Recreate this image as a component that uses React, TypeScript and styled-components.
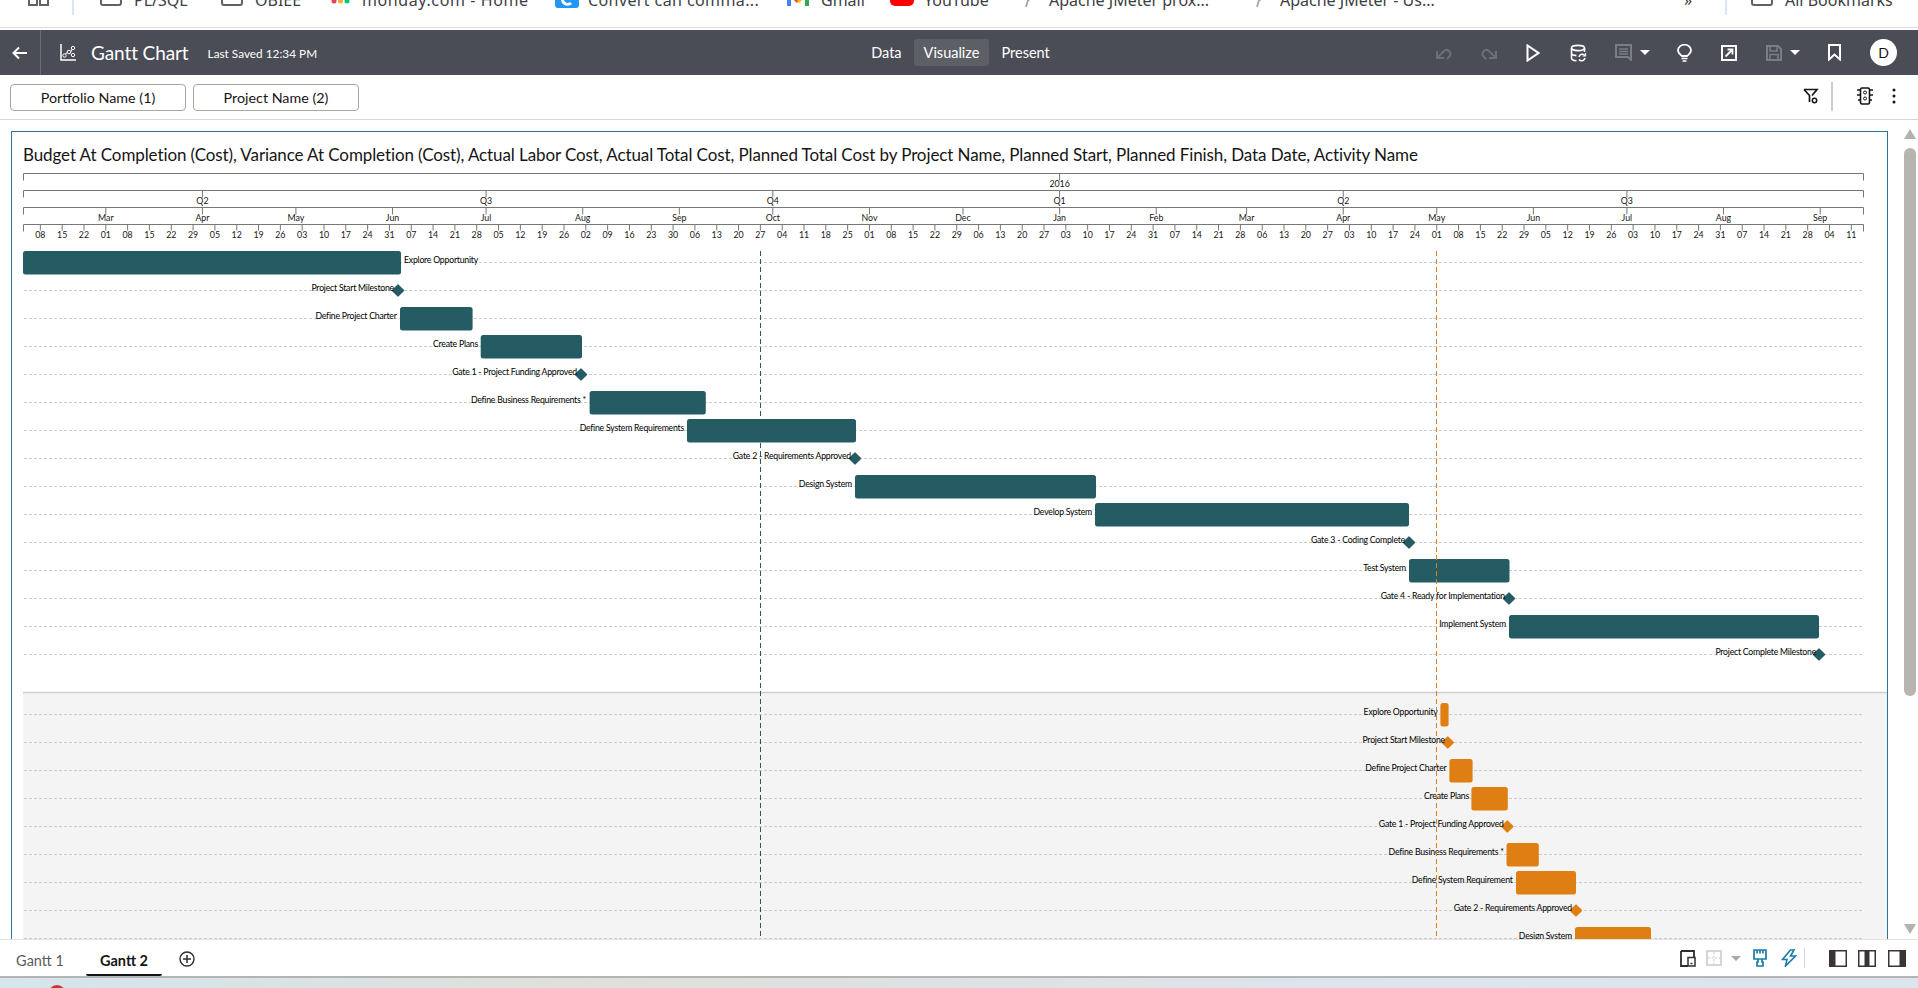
import React from 'react';
import styled, { createGlobalStyle } from 'styled-components';

const GlobalStyle = createGlobalStyle`
  html, body { margin: 0; padding: 0; background: #fff; overflow: hidden; }
  body { font-family: Lato, "Noto Sans", sans-serif; color: #161513; }
`;

const Page = styled.div`
  width: 1918px;
  height: 988px;
  display: flex;
  flex-direction: column;
  overflow: hidden;
`;

/* browser bookmarks, cut off by the top of the capture */
const BookmarkBar = styled.div`
  height: 30px;
  flex: none;
  box-sizing: border-box;
  border-bottom: 2px solid #fff;
  box-shadow: inset 0 -1px 0 #dcdcdc;
  overflow: hidden;
  background: #fff;
`;
const BookmarkRow = styled.div`
  display: flex;
  align-items: center;
  height: 24px;
  margin-top: -17px;
  padding-left: 28px;
`;
const BookmarkItem = styled.div<{ $w: number; $gap?: number }>`
  width: ${p => p.$w}px;
  flex: none;
  display: flex;
  align-items: center;
  gap: ${p => p.$gap ?? 12}px;
  font-family: "Noto Sans", sans-serif;
  font-size: 16px;
  color: #3c4043;
  white-space: nowrap;
`;
const BookmarkText = styled.span<{ $spread?: number }>`
  margin-top: 10px;
  letter-spacing: ${p => p.$spread || 0}px;
`;
const BookmarkDivider = styled.div<{ $mr: number }>`
  width: 2px;
  height: 40px;
  background: #dbe6f2;
  margin-right: ${p => p.$mr}px;
  flex: none;
`;

const HeaderBar = styled.header`
  height: 45px;
  flex: none;
  background: #4a4d55;
  color: #fff;
  display: grid;
  grid-template-columns: 1fr auto 1fr;
  align-items: center;
`;
const HeaderLeft = styled.div`
  display: flex;
  align-items: center;
  height: 100%;
`;
const BackSlot = styled.div`
  width: 40px;
  height: 100%;
  border-right: 1px solid #6a6d74;
  display: flex;
  align-items: center;
  justify-content: center;
  box-sizing: content-box;
  margin-right: 19px;
`;
const AppTitle = styled.div`
  font-size: 19px;
  margin-left: 15px;
  letter-spacing: -0.1px;
`;
const SavedText = styled.div`
  font-size: 11.8px;
  margin-left: 19px;
  margin-top: 2px;
`;
const ModeNav = styled.nav`
  display: flex;
  align-items: center;
  gap: 2px;
  margin-left: 3px;
`;
const ModeItem = styled.div<{ $active?: boolean }>`
  height: 27px;
  line-height: 27px;
  padding: 0 10px;
  font-size: 14.5px;
  border-radius: 3px;
  background: ${p => (p.$active ? '#5c5f66' : 'transparent')};
`;
const HeaderRight = styled.div`
  display: flex;
  align-items: center;
  justify-content: flex-end;
  padding-right: 21px;
`;
const IconSlot = styled.div<{ $w: number }>`
  width: ${p => p.$w}px;
  display: flex;
  align-items: center;
  justify-content: center;
  gap: 8px;
  flex: none;
`;
const Caret = styled.span<{ $color: string }>`
  width: 0;
  height: 0;
  border-left: 5px solid transparent;
  border-right: 5px solid transparent;
  border-top: 5px solid ${p => p.$color};
`;
const Avatar = styled.div`
  width: 27px;
  height: 27px;
  border-radius: 50%;
  background: #fff;
  color: #161513;
  font-size: 14px;
  line-height: 27px;
  text-align: center;
  margin-left: 21px;
`;

const FilterBar = styled.div`
  height: 45px;
  flex: none;
  box-sizing: border-box;
  border-bottom: 1px solid #d4d4d4;
  display: flex;
  align-items: flex-start;
  padding: 9px 0 0 10px;
  gap: 7px;
`;
const FilterChip = styled.div<{ $w: number }>`
  width: ${p => p.$w}px;
  height: 27px;
  box-sizing: border-box;
  border: 1px solid #aaa59f;
  border-radius: 4px;
  font-size: 14.3px;
  line-height: 25px;
  text-align: center;
`;
const FilterTools = styled.div`
  margin-left: auto;
  display: flex;
  align-items: center;
  height: 30px;
  margin-top: -3px;
  padding-right: 3px;
`;
const ToolDivider = styled.div`
  width: 2px;
  height: 29px;
  background: #cfccc8;
  margin: 0 24px 0 12px;
`;

const CanvasArea = styled.div`
  flex: 1;
  display: flex;
  min-height: 0;
  padding-top: 11px;
`;
const ChartPanel = styled.section`
  width: 1877px;
  margin-left: 11px;
  box-sizing: border-box;
  border: 1px solid #2f7596;
  border-bottom: none;
  overflow: hidden;
`;
const ChartTitle = styled.h1`
  margin: 0;
  height: 38px;
  line-height: 46px;
  padding-left: 11px;
  font-size: 17px;
  font-weight: 400;
  letter-spacing: -0.1px;
  white-space: nowrap;
`;
const ChartSvg = styled.svg`
  display: block;
`;
const AxisText = styled.text`
  font-family: Lato, sans-serif;
  font-size: 8.8px;
  fill: #161513;
  text-anchor: middle;
`;
const BarLabel = styled.text<{ $right?: boolean }>`
  font-family: Lato, sans-serif;
  font-size: 8.7px;
  letter-spacing: -0.22px;
  fill: #000;
  text-anchor: ${p => (p.$right ? 'start' : 'end')};
`;

const Scrollbar = styled.div`
  width: 30px;
  display: flex;
  flex-direction: column;
  align-items: flex-end;
  padding-right: 2px;
  box-sizing: border-box;
`;
const ScrollArrow = styled.div<{ $down?: boolean }>`
  width: 0;
  height: 0;
  border-left: 6px solid transparent;
  border-right: 6px solid transparent;
  border-${p => (p.$down ? 'top' : 'bottom')}: 10px solid #b5b1ac;
  margin-top: ${p => (p.$down ? 228 : -2)}px;
`;
const ScrollThumb = styled.div`
  width: 12px;
  height: 548px;
  margin-top: 9px;
  border-radius: 6px;
  background: #b8b4af;
`;

const TabBar = styled.div`
  height: 37px;
  flex: none;
  box-sizing: border-box;
  border-top: 1px solid #e2e2e2;
  display: flex;
  align-items: stretch;
  padding-right: 6px;
`;
const Tab = styled.div<{ $active?: boolean }>`
  width: 76px;
  margin-left: ${p => (p.$active ? 8 : 2)}px;
  box-sizing: border-box;
  text-align: center;
  font-size: 14.5px;
  line-height: 42px;
  font-weight: ${p => (p.$active ? 700 : 400)};
  color: ${p => (p.$active ? '#161513' : '#5b5b5b')};
  border-bottom: 2px solid ${p => (p.$active ? '#161513' : 'transparent')};
  border-radius: 0 0 2px 2px;
`;
const AddTab = styled.div`
  margin-left: 17px;
  padding-top: 11px;
`;
const TabTools = styled.div`
  margin-left: auto;
  display: flex;
  align-items: center;
`;
const TabDivider = styled.div`
  width: 1px;
  height: 20px;
  background: #d4d4d4;
  margin-right: 19px;
`;
const DesktopStrip = styled.div`
  height: 12px;
  flex: none;
  box-sizing: border-box;
  border-top: 2px solid #b4b4b4;
  background: linear-gradient(90deg, #d5e6ef 0%, #dfe0da 30%, #dde4ec 70%, #dbe5ee 100%);
  display: flex;
  padding-left: 48px;
  overflow: hidden;
`;
const TaskIcon = styled.div`
  width: 18px;
  height: 18px;
  margin-top: 7px;
  border-radius: 50%;
  background: #c8342b;
`;

/* ---- icons ---- */
const Ic = ({ w = 18, h = 18, children }: { w?: number; h?: number; children: React.ReactNode }) => (
  <svg width={w} height={h} viewBox={`0 0 ${w} ${h}`} fill="none">{children}</svg>
);

const BackIcon = () => (
  <Ic w={16} h={14}>
    <path d="M15 7H2M7 1.500 1.500 7 7 12.500" stroke="#fff" strokeWidth="2" />
  </Ic>
);
const GanttIcon = () => (
  <Ic w={16} h={17}>
    <path d="M1 0v16h15" stroke="#fff" strokeWidth="1.500" />
    <path d="M4 11l4-3 2 1 3-5" stroke="#fff" strokeWidth="1" />
    <circle cx="4.500" cy="11.500" r="1.700" fill="#4a4d55" stroke="#fff" />
    <circle cx="9" cy="8" r="1.800" fill="#4a4d55" stroke="#fff" />
    <circle cx="13" cy="4" r="1.700" fill="#4a4d55" stroke="#fff" />
    <circle cx="13" cy="11" r="1.700" fill="#4a4d55" stroke="#fff" />
  </Ic>
);
const UndoIcon = ({ flip }: { flip?: boolean }) => (
  <Ic w={17} h={15}>
    <g transform={flip ? 'matrix(-1 0 0 1 17 0)' : undefined} stroke="#6c6f75" strokeWidth="2">
      <path d="M2 6v7h7" />
      <path d="M2 13 9 6c3-3 8 1 6 5l-3 3" />
    </g>
  </Ic>
);
const PlayIcon = () => (
  <Ic w={14} h={18}>
    <path d="M1.500 1.500v15L12.500 9z" stroke="#fff" strokeWidth="2" strokeLinejoin="miter" />
  </Ic>
);
const DataIcon = () => (
  <Ic w={17} h={18}>
    <ellipse cx="8" cy="4" rx="6.500" ry="2.600" stroke="#fff" strokeWidth="1.600" />
    <path d="M1.500 4v10c0 1.600 2.500 2.600 5 2.700M14.500 4v4M1.500 9c0 1.400 2.500 2.500 5 2.600" stroke="#fff" strokeWidth="1.600" />
    <path d="M9 13a3.400 3.400 0 0 1 6-1.500M15 14a3.400 3.400 0 0 1-6 1.500" stroke="#fff" strokeWidth="1.500" />
    <path d="M15.500 9v3h-3" stroke="#fff" strokeWidth="1.200" />
  </Ic>
);
const CommentIcon = () => (
  <Ic w={17} h={17}>
    <path d="M1 1h15v15l-3-3H1z" stroke="#7a7d83" strokeWidth="2" />
    <path d="M4 5h9M4 7.500h9M4 10h9" stroke="#7a7d83" strokeWidth="1.400" />
  </Ic>
);
const BulbIcon = () => (
  <Ic w={15} h={18}>
    <path d="M5 12C3.500 10.500 1 9.500 1 6.500a6.500 5.800 0 0 1 13 0c0 3-2.500 4-4 5.500z" stroke="#fff" strokeWidth="1.800" />
    <path d="M4.500 14.500h6M5.500 17h4" stroke="#fff" strokeWidth="1.700" />
  </Ic>
);
const PresentIcon = () => (
  <Ic w={16} h={16}>
    <rect x="1" y="1" width="14" height="14" stroke="#fff" strokeWidth="2" />
    <path d="M4.500 11.500 11 5M6.500 4.500h5v5" stroke="#fff" strokeWidth="1.800" />
  </Ic>
);
const SaveIcon = () => (
  <Ic w={16} h={16}>
    <path d="M1 1h11l3 3v11H1z" stroke="#7a7d83" strokeWidth="2" />
    <path d="M4 1v5h7V1M4 15V9.500h8V15" stroke="#7a7d83" strokeWidth="1.600" />
  </Ic>
);
const BookmarkIcon = () => (
  <Ic w={13} h={17}>
    <path d="M1 1h11v14.500L6.500 10.500 1 15.500z" stroke="#fff" strokeWidth="2" />
  </Ic>
);
const FilterIcon = () => (
  <Ic w={16} h={16}>
    <path d="M1 1.500h13L9 7.500M1 1.500l5.500 6V14" stroke="#161513" strokeWidth="1.700" />
    <circle cx="11.500" cy="12.500" r="2.200" stroke="#161513" strokeWidth="1.500" />
  </Ic>
);
const SignalIcon = () => (
  <Ic w={16} h={18}>
    <rect x="3.500" y="1" width="9" height="16" rx="1.500" stroke="#161513" strokeWidth="1.600" />
    <path d="M0 3h3.500M0 8h3.500M1 13h2.500M12.500 3H16M12.500 8H16M12.500 13H15" stroke="#161513" strokeWidth="1.700" />
    <circle cx="8" cy="5.500" r="1.500" stroke="#161513" />
    <circle cx="8" cy="11.500" r="1.500" stroke="#161513" />
  </Ic>
);
const DotsIcon = () => (
  <Ic w={4} h={18}>
    <circle cx="2" cy="3" r="1.500" fill="#161513" />
    <circle cx="2" cy="9" r="1.500" fill="#161513" />
    <circle cx="2" cy="15" r="1.500" fill="#161513" />
  </Ic>
);
const DeviceIcon = () => (
  <Ic w={16} h={17}>
    <path d="M1 1h13v6M8 16H1V1" stroke="#312d2a" strokeWidth="1.800" />
    <rect x="8" y="7.500" width="7" height="8.500" stroke="#312d2a" strokeWidth="1.500" />
    <path d="M10.500 13.500h2" stroke="#312d2a" strokeWidth="1.500" />
  </Ic>
);
const GridIcon = () => (
  <Ic w={16} h={16}>
    <rect x="1" y="1" width="14" height="14" stroke="#c9c9c9" strokeWidth="1.500" />
    <path d="M8 2v12M2 8h12" stroke="#c9c9c9" strokeDasharray="2 1.500" />
  </Ic>
);
const BrushIcon = () => (
  <Ic w={14} h={18}>
    <path d="M1 1h12v9H1zM4 1v3.500M7 1v3.500M10 1v3.500M5 10v3H4v4h6v-4H9v-3" stroke="#1e7aa8" strokeWidth="1.700" />
  </Ic>
);
const BoltIcon = () => (
  <Ic w={16} h={18}>
    <path d="M9.500 1 1.500 10.500H6L4.500 17 14.500 7H9.500L13 1z" stroke="#1e7aa8" strokeWidth="1.600" />
  </Ic>
);
const LayoutIcon = ({ mode }: { mode: 'left' | 'middle' | 'right' }) => (
  <Ic w={18} h={17}>
    <rect x="0.750" y="0.750" width="16.500" height="15.500" fill="#fff" stroke="#3a3532" strokeWidth="1.500" />
    {mode === 'left' && <rect x="0" y="0" width="6.500" height="17" fill="#3a3532" />}
    {mode === 'middle' && <rect x="6.500" y="0" width="5" height="17" fill="#3a3532" />}
    {mode === 'right' && <rect x="11.500" y="0" width="6.500" height="17" fill="#3a3532" />}
  </Ic>
);
const PlusCircle = () => (
  <Ic w={16} h={16}>
    <circle cx="8" cy="8" r="7" stroke="#312d2a" strokeWidth="1.400" />
    <path d="M4 8h8M8 4v8" stroke="#312d2a" strokeWidth="1.500" />
  </Ic>
);
const Folder = () => (
  <Ic w={22} h={22}>
    <rect x="1" y="1" width="20" height="20" rx="2" stroke="#5f6368" strokeWidth="2" />
  </Ic>
);
const AppsIcon = () => (
  <Ic w={21} h={26}>
    <path d="M1 15h8v8H1zM12 15h8v8h-8z" stroke="#5f6368" strokeWidth="2" />
  </Ic>
);
const MondayIcon = () => (
  <Ic w={19} h={22}>
    <circle cx="3" cy="17" r="2.500" fill="#e2445c" />
    <circle cx="9.500" cy="17" r="2.500" fill="#fdab3d" />
    <circle cx="16" cy="17" r="2.500" fill="#00c875" />
  </Ic>
);
const ConvertIcon = () => (
  <Ic w={24} h={26}>
    <rect x="0" y="0" width="24" height="26" rx="3" fill="#2196f3" />
    <path d="M16 14a5 5 0 1 1-1-8" stroke="#fff" strokeWidth="3" transform="translate(0 7)" />
  </Ic>
);
const GmailIcon = () => (
  <Ic w={22} h={22}>
    <path d="M2 8v14" stroke="#4285f4" strokeWidth="4" />
    <path d="M20 8v14" stroke="#34a853" strokeWidth="4" />
    <path d="M7 14l4 4" stroke="#ea4335" strokeWidth="3" />
    <path d="M15 14l-4 4" stroke="#fbbc04" strokeWidth="3" />
  </Ic>
);
const YouTubeIcon = () => (
  <Ic w={24} h={22}>
    <rect x="0" y="0" width="24" height="22" rx="5" fill="#f00" />
    <path d="M10 5v8l6-4z" fill="#fff" />
  </Ic>
);
const FeatherIcon = () => (
  <Ic w={14} h={24}>
    <path d="M11 4C8 8 6 12 5 18l4-2c1-4 2-8 2-12z" fill="#8c3a62" />
    <path d="M5 17 3 24" stroke="#a9a3b8" strokeWidth="1.800" />
  </Ic>
);

/* ---- chart data, in page pixels ---- */
const JAN_1_2016 = Date.UTC(2016, 0, 1);
const PX_PER_DAY = 3.117;
const xOf = (y: number, m: number, d: number) =>
  1059.6 + ((Date.UTC(y, m, d) - JAN_1_2016) / 86400000) * PX_PER_DAY;

const AXIS_LEFT = 23.5;
const AXIS_RIGHT = 1863.5;
const TEAL = '#255c63';
const ORANGE = '#df7e12';
const MONTHS = ['Jan', 'Feb', 'Mar', 'Apr', 'May', 'Jun', 'Jul', 'Aug', 'Sep', 'Oct', 'Nov', 'Dec'];

const quarters = [
  { label: 'Q2', x: xOf(2015, 3, 1) },
  { label: 'Q3', x: xOf(2015, 6, 1) },
  { label: 'Q4', x: xOf(2015, 9, 1) },
  { label: 'Q1', x: xOf(2016, 0, 1) },
  { label: 'Q2', x: xOf(2016, 3, 1) },
  { label: 'Q3', x: xOf(2016, 6, 1) },
];

const months: { label: string; x: number }[] = [];
for (let i = 2; i <= 20; i++) {
  months.push({ label: MONTHS[i % 12], x: xOf(2015 + Math.floor(i / 12), i % 12, 1) });
}

const weeks: { label: string; x: number }[] = [];
for (let t = Date.UTC(2015, 1, 8); t <= Date.UTC(2016, 8, 11); t += 7 * 86400000) {
  const d = new Date(t);
  weeks.push({
    label: String(d.getUTCDate()).padStart(2, '0'),
    x: xOf(d.getUTCFullYear(), d.getUTCMonth(), d.getUTCDate()),
  });
}

type Task = { name: string; from?: number; to?: number; at?: number; end?: number; after?: boolean };

const planned: Task[] = [
  { name: 'Explore Opportunity', from: 23, to: 401, after: true },
  { name: 'Project Start Milestone', at: 398, end: 394 },
  { name: 'Define Project Charter', from: 400, to: 472.6, end: 396.7 },
  { name: 'Create Plans', from: 480.7, to: 582, end: 478 },
  { name: 'Gate 1 - Project Funding Approved', at: 581, end: 577 },
  { name: 'Define Business Requirements *', from: 589.6, to: 705.8, end: 586 },
  { name: 'Define System Requirements', from: 687, to: 856, end: 684 },
  { name: 'Gate 2 - Requirements Approved', at: 855, end: 851 },
  { name: 'Design System', from: 855, to: 1096, end: 852 },
  { name: 'Develop System', from: 1095, to: 1409, end: 1092 },
  { name: 'Gate 3 - Coding Complete', at: 1409, end: 1405 },
  { name: 'Test System', from: 1409, to: 1509.5, end: 1406 },
  { name: 'Gate 4 - Ready for Implementation', at: 1509, end: 1505 },
  { name: 'Implement System', from: 1509, to: 1819, end: 1506 },
  { name: 'Project Complete Milestone', at: 1819, end: 1816 },
];

const actual: Task[] = [
  { name: 'Explore Opportunity', from: 1440.4, to: 1448.6, end: 1437.6 },
  { name: 'Project Start Milestone', at: 1447.8, end: 1445 },
  { name: 'Define Project Charter', from: 1449.4, to: 1472.6, end: 1446.5 },
  { name: 'Create Plans', from: 1471.4, to: 1507.8, end: 1469 },
  { name: 'Gate 1 - Project Funding Approved', at: 1507.3, end: 1503.7 },
  { name: 'Define Business Requirements *', from: 1506.5, to: 1538.8, end: 1503.7 },
  { name: 'Define System Requirement', from: 1516, to: 1576, end: 1512.6 },
  { name: 'Gate 2 - Requirements Approved', at: 1576, end: 1572 },
  { name: 'Design System', from: 1575, to: 1651, end: 1572 },
];

function TaskRows({ tasks, top, color }: { tasks: Task[]; top: number; color: string }) {
  return (
    <>
      {tasks.map((t, i) => {
        const y = top + i * 28;
        return (
          <g key={t.name + i}>
            {t.at !== undefined ? (
              <rect
                x={t.at - 4.6}
                y={y - 4.1}
                width="9.200"
                height="9.200"
                rx="1"
                fill={color}
                transform={`rotate(45 ${t.at} ${y + 0.5})`}
              />
            ) : (
              <rect x={t.from} y={y - 11} width={(t.to || 0) - (t.from || 0)} height="23.500" rx="2.500" fill={color} />
            )}
            {t.after ? (
              <BarLabel $right x={(t.to || 0) + 3} y={y + 1}>{t.name}</BarLabel>
            ) : (
              <BarLabel x={t.end} y={y + 1}>{t.name}</BarLabel>
            )}
          </g>
        );
      })}
    </>
  );
}

function GanttSvg() {
  const rowLines: number[] = [];
  for (let i = 0; i < 15; i++) rowLines.push(262 + i * 28);
  for (let i = 0; i < 9; i++) rowLines.push(714 + i * 28);
  return (
    <ChartSvg width="1875" height="769" viewBox="12 170 1875 769">
      <rect x="23" y="692" width="1864" height="247" fill="#f4f4f4" />
      <path d="M23 692.500H1887" stroke="#cfcfcf" strokeWidth="1.500" />

      {[173.5, 190.5, 207.5, 224.5].map(y => (
        <path key={y} d={`M${AXIS_LEFT} ${y + 7}V${y}H${AXIS_RIGHT}V${y + 7}`} fill="none" stroke="#777" />
      ))}
      <path d="M1059.600 173.500v7" stroke="#777" />
      <AxisText x="1059.600" y="187">2016</AxisText>
      {quarters.map(q => (
        <g key={q.label + q.x}>
          <path d={`M${q.x} 190.500v7`} stroke="#777" />
          <AxisText x={q.x} y="204">{q.label}</AxisText>
        </g>
      ))}
      {months.map(m => (
        <g key={m.label + m.x}>
          <path d={`M${m.x} 207.500v7`} stroke="#777" />
          <AxisText x={m.x} y="221">{m.label}</AxisText>
        </g>
      ))}
      {weeks.map(w => (
        <g key={w.x}>
          <path d={`M${w.x} 224.500v6`} stroke="#777" />
          <AxisText x={w.x} y="238">{w.label}</AxisText>
        </g>
      ))}

      {rowLines.map(y => (
        <path key={y} d={`M24 ${y + 0.5}H1863`} stroke="#cccccc" strokeDasharray="3 2" />
      ))}

      <TaskRows tasks={planned} top={262} color={TEAL} />
      <TaskRows tasks={actual} top={714} color={ORANGE} />

      <path d="M760.500 251V939" stroke={TEAL} strokeDasharray="5 3" />
      <path d="M1436.500 251V939" stroke="#d97f1c" strokeDasharray="5 3" />
    </ChartSvg>
  );
}

export default function App() {
  return (
    <Page>
      <GlobalStyle />
      <BookmarkBar>
        <BookmarkRow>
          <BookmarkItem $w={44}><AppsIcon /></BookmarkItem>
          <BookmarkDivider $mr={26} />
          <BookmarkItem $w={121}><Folder /><BookmarkText>PL/SQL</BookmarkText></BookmarkItem>
          <BookmarkItem $w={110}><Folder /><BookmarkText>OBIEE</BookmarkText></BookmarkItem>
          <BookmarkItem $w={224}><MondayIcon /><BookmarkText $spread={0.6}>monday.com - Home</BookmarkText></BookmarkItem>
          <BookmarkItem $w={232} $gap={9}><ConvertIcon /><BookmarkText $spread={0.4}>Convert can comma...</BookmarkText></BookmarkItem>
          <BookmarkItem $w={103}><GmailIcon /><BookmarkText>Gmail</BookmarkText></BookmarkItem>
          <BookmarkItem $w={133} $gap={10}><YouTubeIcon /><BookmarkText>YouTube</BookmarkText></BookmarkItem>
          <BookmarkItem $w={231}><FeatherIcon /><BookmarkText>Apache JMeter prox...</BookmarkText></BookmarkItem>
          <BookmarkItem $w={430}><FeatherIcon /><BookmarkText>Apache JMeter - Us...</BookmarkText></BookmarkItem>
          <BookmarkItem $w={41}><BookmarkText>»</BookmarkText></BookmarkItem>
          <BookmarkDivider $mr={24} />
          <BookmarkItem $w={150}><Folder /><BookmarkText>All Bookmarks</BookmarkText></BookmarkItem>
        </BookmarkRow>
      </BookmarkBar>

      <HeaderBar>
        <HeaderLeft>
          <BackSlot><BackIcon /></BackSlot>
          <GanttIcon />
          <AppTitle>Gantt Chart</AppTitle>
          <SavedText>Last Saved 12:34 PM</SavedText>
        </HeaderLeft>
        <ModeNav>
          <ModeItem>Data</ModeItem>
          <ModeItem $active>Visualize</ModeItem>
          <ModeItem>Present</ModeItem>
        </ModeNav>
        <HeaderRight>
          <IconSlot $w={36}><UndoIcon /></IconSlot>
          <IconSlot $w={56}><UndoIcon flip /></IconSlot>
          <IconSlot $w={32}><PlayIcon /></IconSlot>
          <IconSlot $w={58}><DataIcon /></IconSlot>
          <IconSlot $w={50}><CommentIcon /><Caret $color="#fff" /></IconSlot>
          <IconSlot $w={54}><BulbIcon /></IconSlot>
          <IconSlot $w={36}><PresentIcon /></IconSlot>
          <IconSlot $w={72}><SaveIcon /><Caret $color="#fff" /></IconSlot>
          <IconSlot $w={30}><BookmarkIcon /></IconSlot>
          <Avatar>D</Avatar>
        </HeaderRight>
      </HeaderBar>

      <FilterBar>
        <FilterChip $w={176}>Portfolio Name (1)</FilterChip>
        <FilterChip $w={166}>Project Name (2)</FilterChip>
        <FilterTools>
          <FilterIcon />
          <ToolDivider />
          <SignalIcon />
          <IconSlot $w={42}><DotsIcon /></IconSlot>
        </FilterTools>
      </FilterBar>

      <CanvasArea>
        <ChartPanel>
          <ChartTitle>
            Budget At Completion (Cost), Variance At Completion (Cost), Actual Labor Cost, Actual Total Cost, Planned Total Cost by Project Name, Planned Start, Planned Finish, Data Date, Activity Name
          </ChartTitle>
          <GanttSvg />
        </ChartPanel>
        <Scrollbar>
          <ScrollArrow />
          <ScrollThumb />
          <ScrollArrow $down />
        </Scrollbar>
      </CanvasArea>

      <TabBar>
        <Tab>Gantt 1</Tab>
        <Tab $active>Gantt 2</Tab>
        <AddTab><PlusCircle /></AddTab>
        <TabTools>
          <IconSlot $w={28}><DeviceIcon /></IconSlot>
          <IconSlot $w={24}><GridIcon /></IconSlot>
          <IconSlot $w={20}><Caret $color="#a8a8a8" /></IconSlot>
          <IconSlot $w={28}><BrushIcon /></IconSlot>
          <IconSlot $w={30}><BoltIcon /></IconSlot>
          <TabDivider />
          <IconSlot $w={28}><LayoutIcon mode="left" /></IconSlot>
          <IconSlot $w={30}><LayoutIcon mode="middle" /></IconSlot>
          <IconSlot $w={30}><LayoutIcon mode="right" /></IconSlot>
        </TabTools>
      </TabBar>

      <DesktopStrip><TaskIcon /></DesktopStrip>
    </Page>
  );
}
